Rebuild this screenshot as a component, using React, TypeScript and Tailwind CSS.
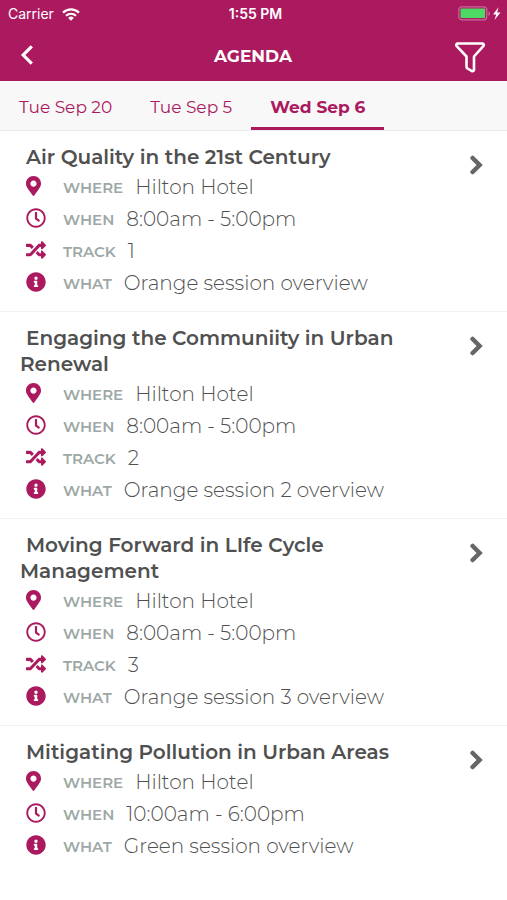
import { FaInfoCircle, FaMapMarkerAlt, FaRandom, FaRegClock } from "react-icons/fa";
import type { IconType } from "react-icons";

type Detail = "WHERE" | "WHEN" | "TRACK" | "WHAT";

type Session = {
  title: string;
  details: [Detail, string][];
};

const icons: Record<Detail, IconType> = {
  WHERE: FaMapMarkerAlt,
  WHEN: FaRegClock,
  TRACK: FaRandom,
  WHAT: FaInfoCircle,
};

const iconSizes: Record<Detail, string> = {
  WHERE: "h-5 w-[15px]",
  WHEN: "h-5 w-5",
  TRACK: "h-5 w-5",
  WHAT: "h-5 w-5",
};

const sessions: Session[] = [
  {
    title: "Air Quality in the 21st Century",
    details: [
      ["WHERE", "Hilton Hotel"],
      ["WHEN", "8:00am - 5:00pm"],
      ["TRACK", "1"],
      ["WHAT", "Orange session overview"],
    ],
  },
  {
    title: "Engaging the Communiity in Urban Renewal",
    details: [
      ["WHERE", "Hilton Hotel"],
      ["WHEN", "8:00am - 5:00pm"],
      ["TRACK", "2"],
      ["WHAT", "Orange session 2 overview"],
    ],
  },
  {
    title: "Moving Forward in LIfe Cycle Management",
    details: [
      ["WHERE", "Hilton Hotel"],
      ["WHEN", "8:00am - 5:00pm"],
      ["TRACK", "3"],
      ["WHAT", "Orange session 3 overview"],
    ],
  },
  {
    title: "Mitigating Pollution in Urban Areas",
    details: [
      ["WHERE", "Hilton Hotel"],
      ["WHEN", "10:00am - 6:00pm"],
      ["WHAT", "Green session overview"],
    ],
  },
];

const tabs = ["Tue Sep 20", "Tue Sep 5", "Wed Sep 6"];

function StatusBar() {
  return (
    <div className="grid h-7 grid-cols-3 items-center pr-1 pl-2 font-[Inter,sans-serif] text-sm">
      <div className="flex items-center gap-2">
        <span>Carrier</span>
        <svg viewBox="0 0 18 13" className="h-[13px] w-[18px]" fill="none" stroke="currentColor" strokeWidth="2.2" aria-hidden="true">
          <path d="M1 4.6C5.6.3 12.400.3 17 4.600" />
          <path d="M4 7.800c2.900-2.600 7.100-2.600 10 0" />
          <path d="M9 12.800 6.200 9.900a4.100 4.100 0 0 1 5.600 0Z" fill="currentColor" stroke="none" />
        </svg>
      </div>
      <span className="text-center font-semibold">1:55 PM</span>
      <svg viewBox="0 0 45 16" className="h-4 w-[45px] justify-self-end" aria-label="Battery charging" role="img">
        <rect x="0.800" y="0.800" width="28" height="13" rx="3" fill="none" stroke="#c9679a" strokeWidth="1.200" />
        <rect x="2.500" y="2.500" width="24.600" height="9.600" rx="1" fill="#4cd964" />
        <path d="M30.500 5.200c2 .8 2 4 0 4.800Z" fill="#c9679a" />
        <path d="M40.500 1.200 35 8.500h3.200L36.500 14l6-7.500h-3.300Z" fill="white" />
      </svg>
    </div>
  );
}

function SessionCard({ title, details }: Session) {
  return (
    <li className="flex items-start justify-between border-b border-[#f1f1f1] py-[13px] pr-6 pl-5 last:border-b-0">
      <div className="min-w-0 flex-1">
        <h2 className="max-w-96 indent-1.5 text-xl leading-[26px] font-semibold text-[#505050]">{title}</h2>
        <dl className="pl-1.5">
          {details.map(([label, value]) => {
            const Icon = icons[label];
            return (
              <div key={label} className="flex h-8 items-center">
                <dt className="flex items-center text-[15px] font-semibold text-[#9da8a6]">
                  <span className="w-[37px] text-[#ab1a5f]">
                    <Icon className={iconSizes[label]} aria-hidden="true" />
                  </span>
                  <span className="pt-1">{label}</span>
                </dt>
                <dd className="pt-px pl-3 text-xl font-light text-[#505050]">{value}</dd>
              </div>
            );
          })}
        </dl>
      </div>
      <button type="button" aria-label={`Open ${title}`} className="mt-[11px] text-[#666666]">
        <svg viewBox="0 0 14 20" className="h-5 w-3.5" fill="none" stroke="currentColor" strokeWidth="4.500" strokeLinecap="round" aria-hidden="true">
          <path d="m3.600 3 7 7-7 7" />
        </svg>
      </button>
    </li>
  );
}

export default function App() {
  return (
    <div className="min-h-screen bg-white font-['Montserrat',Inter,sans-serif]">
      <header className="bg-[#ab1a5f] text-white">
        <StatusBar />
        <div className="grid h-[53px] grid-cols-[1fr_auto_1fr] items-center pr-[21px] pl-5">
          <button type="button" aria-label="Back" className="justify-self-start">
            <svg viewBox="0 0 14 20" className="h-5 w-3.5" fill="none" stroke="currentColor" strokeWidth="3.200" aria-hidden="true">
              <path d="M11.800 1.300 3.200 10l8.600 8.700" />
            </svg>
          </button>
          <h1 className="pt-1 text-[17px] font-bold">AGENDA</h1>
          <button type="button" aria-label="Filter" className="justify-self-end pt-1">
            <svg viewBox="0 0 32 32" className="size-8" fill="none" stroke="currentColor" strokeWidth="2.600" strokeLinejoin="round" aria-hidden="true">
              <path d="M3.500 2.500h25q2.200.8.800 2.700L20 15.500V29q-.5 1.500-2 1.200L13.500 27.500Q12.500 27 12.500 25.800V15.500L2.700 5.200Q1.500 3.300 3.500 2.500Z" />
            </svg>
          </button>
        </div>
      </header>
      <nav className="flex h-[50px] border-b border-[#ececec] bg-[#f8f8f8] text-[#ab1a5f]" role="tablist">
        {tabs.map((tab) => (
          <button
            key={tab}
            type="button"
            role="tab"
            aria-selected={tab === "Wed Sep 6"}
            className="h-[49px] border-b-3 border-transparent px-[19px] pt-2 text-[17px] aria-selected:border-[#ab1a5f] aria-selected:font-bold"
          >
            {tab}
          </button>
        ))}
      </nav>
      <ul>
        {sessions.map((session) => (
          <SessionCard key={session.title} {...session} />
        ))}
      </ul>
    </div>
  );
}
